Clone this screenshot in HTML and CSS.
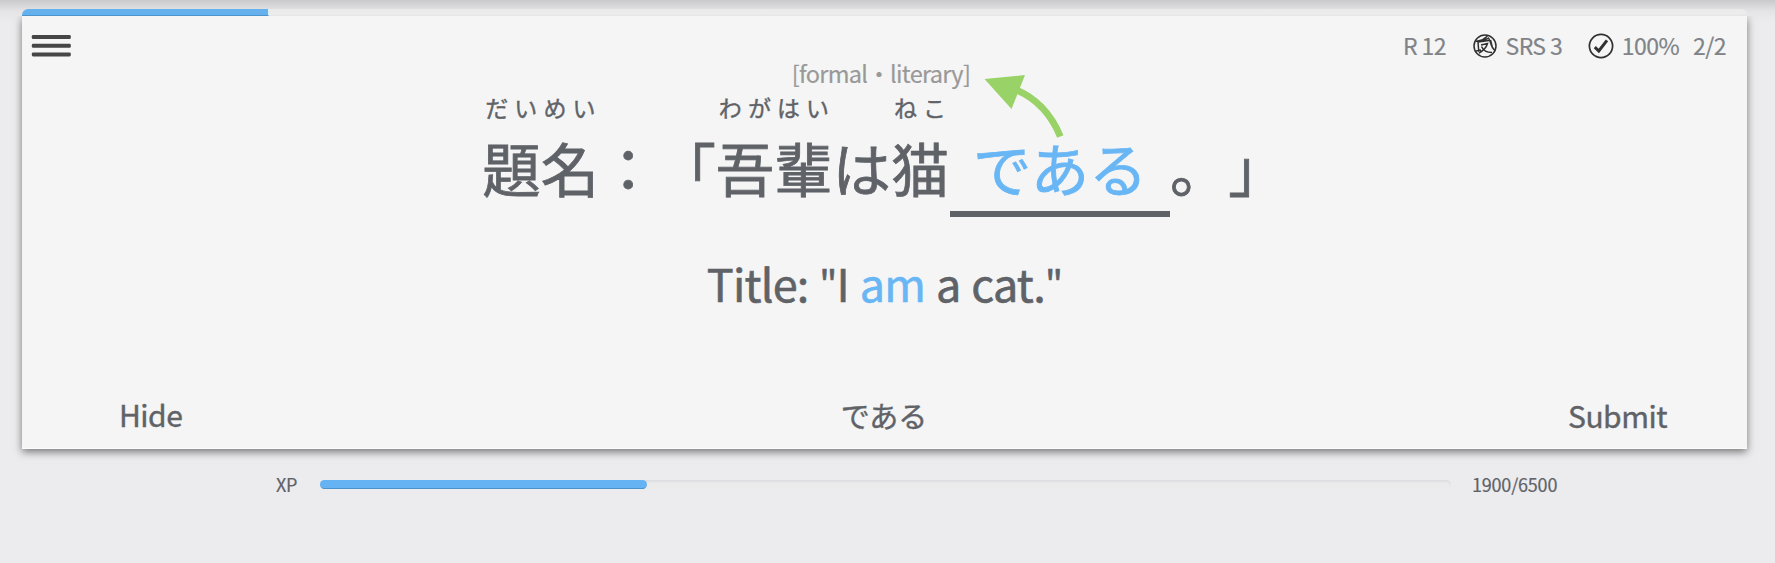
FILE: index.html
```html
<!DOCTYPE html>
<html lang="ja">
<head>
<meta charset="utf-8">
<title>Review</title>
<link rel="stylesheet" href="styles.css">
</head>
<body>
<main class="page">
  <section class="review">
    <div class="progress"><div class="progress-fill"></div></div>
    <div class="card">
      <header class="topbar">
        <svg class="menu" width="40" height="24" viewBox="0 0 40 24"><g fill="#464646"><rect x="0.8" y="1" width="39" height="4" rx="1.300"/><rect x="0.8" y="9.700" width="39" height="4" rx="1.300"/><rect x="0.8" y="18.400" width="39" height="4" rx="1.300"/></g></svg>
        <div class="stats">
          <span class="stat-r">R 12</span>
          <svg class="icon-srs" width="24" height="24" viewBox="0 0 24 24" fill="none" stroke="#303030" stroke-width="1.5"><circle cx="12" cy="12" r="11"/><path d="M2.500 7.500L9 6L14.500 2.200M15 4.500L5 8L5.800 18M5 8L16 6.500M8 11L14.500 9.500C13.500 13 10.500 16.500 6 19M8.500 12.500C10 16 14 18.500 19 18.500M15 3.500C18 6 17 12.500 22 16.500M17.500 6L19.500 14M3 17L8 16"/></svg>
          <span class="stat-srs">SRS 3</span>
          <svg class="icon-check" width="26" height="26" viewBox="0 0 26 26" fill="none" stroke="#303030"><circle cx="13" cy="13" r="11.600" stroke-width="1.700"/><path d="M6.800 14.200L10.800 18L19 7.400" stroke-width="3"/></svg>
          <span class="stat-score">100%</span>
          <span>2/2</span>
        </div>
      </header>
      <div class="hint">[formal・literary]</div>
      <div class="sentence">
        <div class="word"><span class="kana">だいめい</span><span class="base">題名</span></div>
        <div class="word"><span class="base">：「</span></div>
        <div class="word"><span class="kana">わがはい</span><span class="base">吾輩</span></div>
        <div class="word"><span class="base">は</span></div>
        <div class="word"><span class="kana">ねこ</span><span class="base">猫</span></div>
        <div class="word blank"><span class="base">である</span>
          <svg class="arrow" width="82" height="66" viewBox="0 0 82 66"><path d="M31 14.500Q62 27 76.300 61.500" fill="none" stroke="#99d267" stroke-width="6.800"/><path d="M0.500 4L41 0L27.500 34Z" fill="#99d267"/></svg>
        </div>
        <div class="word"><span class="base">。」</span></div>
      </div>
      <div class="translation">Title: <span class="quote">"</span>I <span class="accent">am</span> a cat.<span class="quote">"</span></div>
      <footer class="actions">
        <span class="hide">Hide</span>
        <span class="answer">である</span>
        <span class="submit">Submit</span>
      </footer>
    </div>
  </section>
  <div class="xp">
    <span class="xp-label">XP</span>
    <div class="xp-track"><div class="xp-fill"></div></div>
    <span class="xp-value">1900/6500</span>
  </div>
</main>
</body>
</html>
```
FILE: styles.css
```css
* { box-sizing: border-box; }
body {
  margin: 0;
  background: #ececee;
  color: #5f6368;
  font-family: "Noto Sans CJK JP", sans-serif;
  text-spacing-trim: space-all;
}
.page {
  height: 563px;
  overflow: hidden;
  padding: 9px 28px 0 22px;
  background: linear-gradient(#c9c9cc 0, #d6d6d9 5px, #e4e4e7 11px, #ececee 22px);
}
.review { width: 1725px; }
.progress {
  height: 7px;
  border-radius: 6px 6px 0 0;
  background: linear-gradient(#ebebeb, #ececec 5px, #e4e4e4);
  overflow: hidden;
}
.progress-fill {
  width: 247px;
  height: 7px;
  background: #65b1ee;
  border-right: 1px solid #d9effc;
  border-bottom: 1px solid #4c94cc;
}
.card {
  height: 433px;
  display: flex;
  flex-direction: column;
  background: #f5f5f5;
  border-bottom: 1px solid #fcfcfc;
  box-shadow: 0 3px 8px rgba(0, 0, 0, 0.5);
  clip-path: inset(0 -20px -20px -20px);
}
.topbar {
  height: 42px;
  padding: 18px 21px 0 9px;
  display: flex;
  justify-content: space-between;
}
.stats {
  display: flex;
  height: 24px;
  line-height: 24px;
  align-items: center;
  font-size: 23px;
  letter-spacing: -0.55px;
  color: #808387;
}
.stats span {
  margin-top: -2px;
  -webkit-text-stroke: 0.2px;
}
.icon-srs { margin: 0 8.500px 0 27px; }
.icon-check { margin: 0 7.500px 0 26px; }
.stats .stat-score { margin-right: 14px; }
.hint {
  height: 30px;
  line-height: 30px;
  padding-right: 7px;
  text-align: center;
  font-size: 23.5px;
  letter-spacing: -0.7px;
  color: #999;
  -webkit-text-stroke: 0.2px;
}
.sentence {
  height: 128px;
  display: flex;
  justify-content: center;
  align-items: flex-start;
}
.word {
  display: flex;
  flex-direction: column;
  justify-content: flex-end;
  height: 119px;
  font-size: 58.400px;
  -webkit-text-stroke: 0.8px;
}
.kana {
  height: 38px;
  line-height: 36px;
  margin-right: -10px;
  padding-left: 3px;
  font-size: 23px;
  letter-spacing: 6.1px;
  white-space: nowrap;
  -webkit-text-stroke: 0.4px;
}
.base {
  height: 80px;
  line-height: 80px;
  white-space: nowrap;
}
.blank {
  position: relative;
  height: 129px;
  margin-left: 1px;
  padding: 0 22.500px 4px;
  color: #69b6f5;
  border-bottom: 6px solid #5f6368;
}
.arrow {
  position: absolute;
  left: 34px;
  top: -13px;
}
.translation {
  height: 70px;
  margin-top: 32px;
  line-height: 70px;
  font-size: 45px;
  letter-spacing: -0.8px;
  word-spacing: 1.5px;
  text-align: center;
  -webkit-text-stroke: 0.6px;
}
.quote { font-size: 38px; }
.accent { color: #69b6f5; }
.actions {
  margin-top: auto;
  padding: 0 80px 11px 97px;
  display: grid;
  grid-template-columns: 1fr auto 1fr;
  font-size: 30px;
  letter-spacing: -0.5px;
  line-height: 44px;
  -webkit-text-stroke: 0.4px;
}
.hide { margin-top: -1px; }
.answer {
  margin-left: -18px;
  font-size: 29px;
  letter-spacing: 0;
}
.submit { text-align: right; }
.xp {
  display: flex;
  align-items: center;
  height: 30px;
  margin-top: 20px;
  padding-left: 254px;
  font-size: 18px;
  letter-spacing: -0.2px;
  -webkit-text-stroke: 0.2px;
}
.xp-label { width: 44px; }
.xp-track {
  width: 1131px;
  height: 9px;
  border-radius: 5px;
  background: #ebebec;
  box-shadow: inset 0 2px 2px #dedee0;
}
.xp-fill {
  width: 327px;
  height: 9px;
  border-radius: 5px;
  background: #65b3f3;
  border-bottom: 1px solid #4b93cd;
}
.xp-value { margin-left: 21px; }
```
